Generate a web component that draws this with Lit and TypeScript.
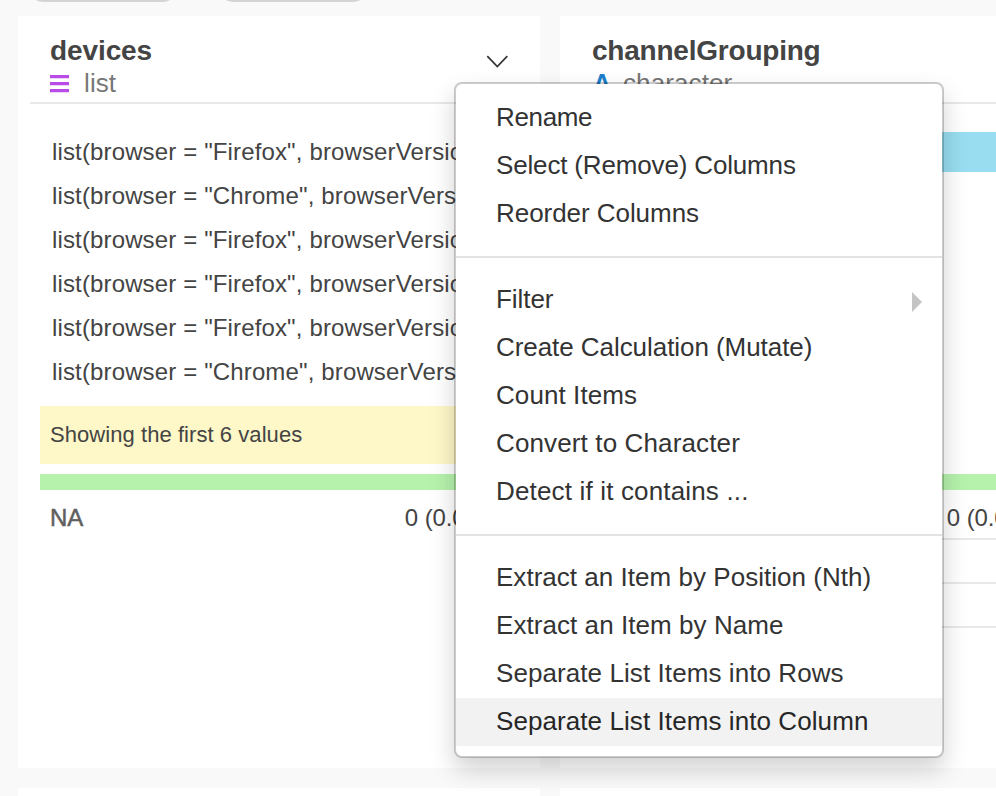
import { LitElement, html, css, nothing } from "lit";
import { customElement, property } from "lit/decorators.js";
import { styleMap } from "lit/directives/style-map.js";

interface MenuItem {
  label: string;
  // letter-spacing of the label, px
  tracking: number;
  submenu?: boolean;
  active?: boolean;
}

const MENU: MenuItem[][] = [
  [
    { label: "Rename", tracking: -0.35 },
    { label: "Select (Remove) Columns", tracking: -0.16 },
    { label: "Reorder Columns", tracking: -0.05 },
  ],
  [
    { label: "Filter", tracking: -0.05, submenu: true },
    { label: "Create Calculation (Mutate)", tracking: -0.06 },
    { label: "Count Items", tracking: 0.08 },
    { label: "Convert to Character", tracking: 0.13 },
    { label: "Detect if it contains ...", tracking: 0.16 },
  ],
  [
    { label: "Extract an Item by Position (Nth)", tracking: 0.03 },
    { label: "Extract an Item by Name", tracking: 0.06 },
    { label: "Separate List Items into Rows", tracking: 0.08 },
    { label: "Separate List Items into Column", tracking: 0.08, active: true },
  ],
];

const FIREFOX = 'list(browser = "Firefox", browserVersion';
const CHROME = 'list(browser = "Chrome", browserVersion';
const VALUES = [FIREFOX, CHROME, FIREFOX, FIREFOX, FIREFOX, CHROME];

@customElement("column-card")
class ColumnCard extends LitElement {
  @property() name = "";
  @property() type = "list";

  static styles = css`
    :host {
      display: block;
      box-sizing: border-box;
      height: 752px;
      padding: 0 12px;
      background: #fff;
      color: #444;
      overflow: hidden;
    }
    .head {
      box-sizing: border-box;
      display: flex;
      justify-content: space-between;
      height: 88px;
      padding: 18px 20px 0;
      border-bottom: 2px solid #e8e8e8;
    }
    .name {
      font-size: 28px;
      line-height: 34px;
      font-weight: 700;
      letter-spacing: -0.22px;
    }
    .name.short {
      letter-spacing: -0.1px;
    }
    .type {
      display: flex;
      align-items: flex-start;
      height: 32px;
      font-size: 26px;
      line-height: 30px;
      color: #777;
      letter-spacing: 0.1px;
    }
    .icon {
      width: 20px;
      height: 20px;
      margin: 6px 14px 0 0;
    }
    .letter {
      width: 20px;
      margin-right: 11px;
      text-align: center;
      font-size: 25px;
      font-weight: 700;
      color: #1c7fcc;
    }
    .chevron {
      width: 22px;
      height: 14px;
      margin-top: 20px;
    }
    .body {
      padding: 28px 10px 0;
    }
    .list {
      height: 274px;
    }
    .value {
      height: 44px;
      line-height: 40px;
      padding-left: 12px;
      font-size: 24px;
      letter-spacing: 0.14px;
      white-space: nowrap;
    }
    .note {
      height: 58px;
      line-height: 58px;
      padding-left: 10px;
      font-size: 22px;
      letter-spacing: 0.06px;
      background: #fef7c8;
    }
    .bar {
      height: 40px;
      background: #98def0;
    }
    .chart {
      height: 332px;
    }
    .valid {
      height: 16px;
      margin-top: 10px;
      background: #b6f2ac;
    }
    .stat {
      box-sizing: border-box;
      display: flex;
      justify-content: space-between;
      height: 44px;
      line-height: 40px;
      padding: 0 10px;
      font-size: 24px;
      letter-spacing: -0.1px;
    }
    .first {
      height: 50px;
      padding-top: 8px;
    }
    .lined {
      border-bottom: 2px solid #e8e8e8;
    }
    .na {
      color: #606060;
      -webkit-text-stroke: 0.5px #606060;
    }
  `;

  render() {
    const isList = this.type === "list";
    return html`
      <div class="head">
        <div>
          <div class="name ${isList ? "short" : ""}">${this.name}</div>
          <div class="type">
            ${isList
              ? html`<svg class="icon" viewBox="0 0 20 20">
                  <path d="M0 2.6h19M0 9.6h19M0 16.6h19" stroke="#b94be8" stroke-width="3.2" />
                </svg>`
              : html`<span class="letter">A</span>`}
            <span>${this.type}</span>
          </div>
        </div>
        ${isList
          ? html`<svg class="chevron" viewBox="0 0 22 14">
              <path d="M1.3 2.2 11.3 12.5 21.3 2.2" fill="none" stroke="#333" stroke-width="1.7" />
            </svg>`
          : nothing}
      </div>
      <div class="body">
        ${isList
          ? html`<div class="list">${VALUES.map((v) => html`<div class="value">${v}</div>`)}</div>
              <div class="note">Showing the first 6 values</div>`
          : html`<div class="chart"><div class="bar"></div></div>`}
        <div class="valid"></div>
        <div class="stat first ${isList ? "" : "lined"}">
          <span class="na">NA</span><span>0 (0.00%)</span>
        </div>
        ${isList ? nothing : html`<div class="stat lined"></div><div class="stat lined"></div>`}
      </div>
    `;
  }
}

@customElement("column-menu")
class ColumnMenu extends LitElement {
  static styles = css`
    :host {
      display: block;
      box-sizing: border-box;
      width: 490px;
      padding: 10px 0;
      border: 2px solid rgba(0, 0, 0, 0.2);
      border-radius: 8px;
      background: #fff;
      background-clip: padding-box;
      box-shadow: 0 12px 24px rgba(0, 0, 0, 0.175);
      color: #333;
    }
    .group + .group {
      margin-top: 18px;
      padding-top: 18px;
      border-top: 2px solid #e2e2e2;
    }
    .item {
      display: flex;
      align-items: center;
      justify-content: space-between;
      height: 48px;
      padding: 0 20px 0 40px;
      font-size: 26px;
      line-height: 46px;
      white-space: nowrap;
    }
    .label {
      height: 48px;
    }
    .active {
      background: #f2f2f2;
      color: #262626;
    }
    .arrow {
      margin-top: 4px;
      border: 10px solid transparent;
      border-right-width: 0;
      border-left-color: #c4c4c4;
    }
  `;

  render() {
    return MENU.map(
      (group) => html`<div class="group">
        ${group.map(
          (item) => html`<div class="item ${item.active ? "active" : ""}">
            <span class="label" style=${styleMap({ letterSpacing: `${item.tracking}px` })}>${item.label}</span>
            ${item.submenu ? html`<span class="arrow"></span>` : nothing}
          </div>`
        )}
      </div>`
    );
  }
}

@customElement("app-root")
class AppRoot extends LitElement {
  static styles = css`
    :host {
      display: block;
      position: relative;
      width: 996px;
      height: 796px;
      overflow: hidden;
      background: #f9f9f9;
      font-family: "Liberation Sans", Arial, sans-serif;
    }
    .pills {
      display: flex;
      align-items: flex-end;
      gap: 36px;
      height: 2px;
      padding-left: 26px;
      margin-bottom: 14px;
      overflow: hidden;
    }
    .pill {
      box-sizing: border-box;
      flex: none;
      width: 154px;
      height: 40px;
      border: 2px solid #d4d4d4;
      border-radius: 18px;
    }
    .grid {
      display: grid;
      grid-template-columns: 522px 522px;
      gap: 20px;
      padding-left: 18px;
    }
    .next {
      height: 40px;
      background: #fff;
    }
    .menu {
      position: absolute;
      left: 454px;
      top: 82px;
    }
  `;

  render() {
    return html`
      <div class="pills"><div class="pill"></div><div class="pill"></div></div>
      <div class="grid">
        <column-card name="devices" type="list"></column-card>
        <column-card name="channelGrouping" type="character"></column-card>
        <div class="next"></div>
        <div class="next"></div>
      </div>
      <column-menu class="menu"></column-menu>
    `;
  }
}
